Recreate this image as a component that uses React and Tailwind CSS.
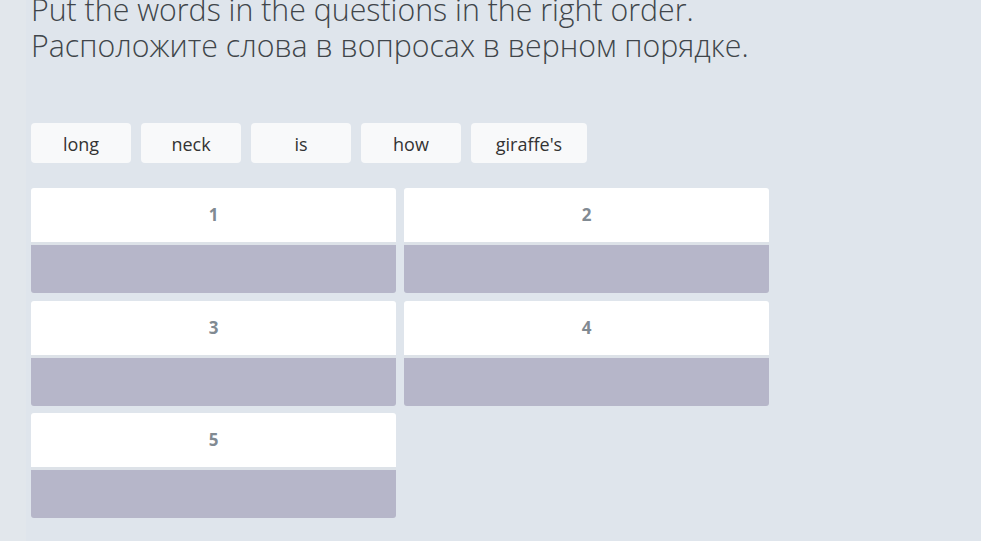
import React from "react";

const words = [
  { text: "long", w: "w-[100px]" },
  { text: "neck", w: "w-[100px]" },
  { text: "is", w: "w-[100px]" },
  { text: "how", w: "w-[100px]" },
  { text: "giraffe's", w: "w-[116px]" },
];

function Slot({ n }) {
  return (
    <div className="flex h-[105px] flex-col overflow-hidden rounded-[3px]">
      <div className="flex h-[54px] items-center justify-center bg-white text-[17px] font-bold text-[#818a92]">
        {n}
      </div>
      <div className="h-[3px] bg-[#dde2e8]" />
      <div className="flex-1 bg-[#b6b6c9]" />
    </div>
  );
}

export default function App() {
  return (
    <div
      className="flex h-[541px] w-[981px] overflow-hidden bg-[#dfe5ec]"
      style={{ fontFamily: '"Open Sans", "Liberation Sans", sans-serif' }}
    >
      <div className="w-[26px] shrink-0 bg-[#e2e7ec]" />
      <div className="flex-1 pl-[5px]">
        <h1 className="-mt-[8px] text-[30.3px] font-light leading-[36px] text-[#40454a]">
          Put the words in the questions in the right order.
          <br />
          Расположите слова в вопросах в верном порядке.
        </h1>

        <div className="mt-[59px] flex gap-[10px]">
          {words.map((w) => (
            <div
              key={w.text}
              className={`${w.w} flex h-[40px] items-center justify-center rounded-[4px] bg-[#f8f9fa] pt-[2px] text-[18px] text-[#333]`}
            >
              {w.text}
            </div>
          ))}
        </div>

        <div className="mt-[25px] grid w-[738px] grid-cols-2 gap-x-[8px] gap-y-[7.5px]">
          {[1, 2, 3, 4, 5].map((n) => (
            <Slot key={n} n={n} />
          ))}
        </div>
      </div>
    </div>
  );
}
